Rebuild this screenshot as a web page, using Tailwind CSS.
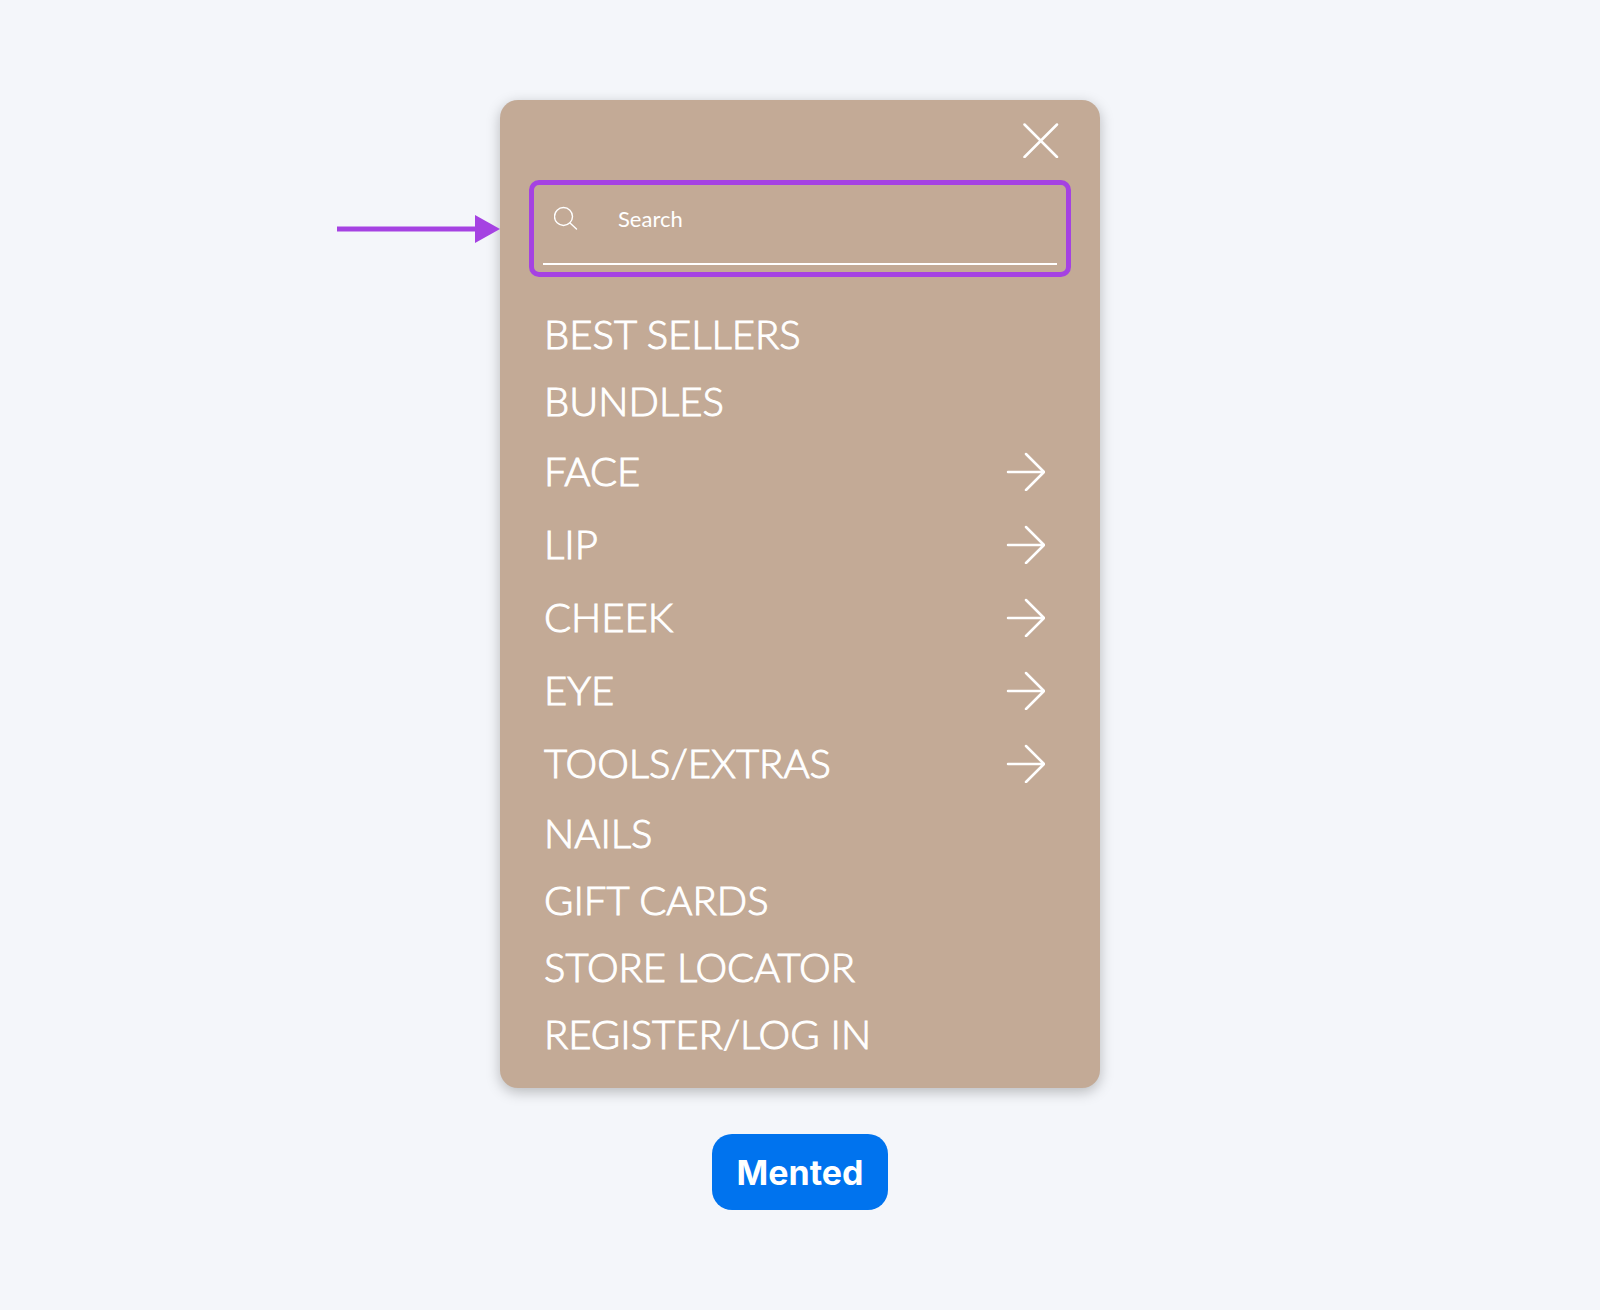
<!DOCTYPE html>
<html lang="en">
  <head>
    <meta charset="utf-8" />
    <meta name="viewport" content="width=device-width, initial-scale=1" />
    <title>Mented - Mobile menu</title>
    <script src="https://cdn.jsdelivr.net/npm/@tailwindcss/browser@4"></script>
  </head>
  <body class="bg-[#f4f6fa]">
    <main class="min-h-screen flex flex-col items-center pt-[100px] pb-[100px] font-['Lato',sans-serif]">
      <div class="relative w-full max-w-[600px] rounded-[18px] bg-[#c3aa96] pb-[21px] text-white shadow-[0_4px_14px_rgba(0,0,0,0.25)]">
        <!-- Pointer to the search field -->
        <svg class="absolute right-full top-[114px] w-[163px] h-[30px]" viewBox="0 0 163 30" fill="#a542e2" aria-hidden="true">
          <rect x="0" y="12.5" width="140" height="5" />
          <path d="M138 1l25 14-25 14z" />
        </svg>

        <div class="flex h-20 items-center justify-end pr-[41px]">
          <button type="button" aria-label="Close menu">
            <svg class="w-9 h-9" viewBox="0 0 36 36" fill="none" stroke="currentColor" stroke-width="2.5" stroke-linecap="round"><path d="M1.5 2.5l32.5 32.5M34 2.5l-32.5 32.5" /></svg>
          </button>
        </div>

        <!-- Search -->
        <form class="mx-[29px] rounded-[10px] border-5 border-[#a542e2] px-[9px] pb-[7px]">
          <div class="flex h-20 items-center border-b-2 border-white pb-3 pl-[11px]">
            <label for="search" class="shrink-0" aria-label="Search">
              <svg class="w-6 h-6" viewBox="0 0 24 24" fill="none" stroke="currentColor" stroke-width="1.4" stroke-linecap="round" aria-hidden="true"><circle cx="9.5" cy="10.5" r="9" /><path d="M16 17l6.5 6" /></svg>
            </label>
            <input id="search" type="search" placeholder="Search" class="ml-10 min-w-0 grow bg-transparent text-[22px] placeholder:text-white focus:outline-none" />
          </div>
        </form>

        <!-- Menu -->
        <nav class="mt-[23px] pl-11 pr-[55px] text-[40px] font-light [-webkit-text-stroke:1px_white]">
          <a href="#" class="flex h-[67px] items-center">BEST SELLERS</a>
          <a href="#" class="flex h-[67px] items-center">BUNDLES</a>
          <a href="#" class="flex h-[73px] items-center justify-between">
            FACE
            <svg class="w-10 h-10" viewBox="0 0 40 40" fill="none" stroke="currentColor" stroke-width="2.5" stroke-linecap="round" stroke-linejoin="round"><path d="M3 21h36M21 3l18 18-18 18" /></svg>
          </a>
          <a href="#" class="flex h-[73px] items-center justify-between">
            LIP
            <svg class="w-10 h-10" viewBox="0 0 40 40" fill="none" stroke="currentColor" stroke-width="2.5" stroke-linecap="round" stroke-linejoin="round"><path d="M3 21h36M21 3l18 18-18 18" /></svg>
          </a>
          <a href="#" class="flex h-[73px] items-center justify-between">
            CHEEK
            <svg class="w-10 h-10" viewBox="0 0 40 40" fill="none" stroke="currentColor" stroke-width="2.5" stroke-linecap="round" stroke-linejoin="round"><path d="M3 21h36M21 3l18 18-18 18" /></svg>
          </a>
          <a href="#" class="flex h-[73px] items-center justify-between">
            EYE
            <svg class="w-10 h-10" viewBox="0 0 40 40" fill="none" stroke="currentColor" stroke-width="2.5" stroke-linecap="round" stroke-linejoin="round"><path d="M3 21h36M21 3l18 18-18 18" /></svg>
          </a>
          <a href="#" class="flex h-[73px] items-center justify-between">
            TOOLS/EXTRAS
            <svg class="w-10 h-10" viewBox="0 0 40 40" fill="none" stroke="currentColor" stroke-width="2.5" stroke-linecap="round" stroke-linejoin="round"><path d="M3 21h36M21 3l18 18-18 18" /></svg>
          </a>
          <a href="#" class="flex h-[67px] items-center">NAILS</a>
          <a href="#" class="flex h-[67px] items-center">GIFT CARDS</a>
          <a href="#" class="flex h-[67px] items-center">STORE LOCATOR</a>
          <a href="#" class="flex h-[67px] items-center">REGISTER/LOG IN</a>
        </nav>
      </div>

      <div class="mt-[46px] flex h-[76px] items-center rounded-[20px] bg-[#0073ee] px-[25px] text-[34px] font-bold text-white font-['Inter',sans-serif]">Mented</div>
    </main>
  </body>
</html>
